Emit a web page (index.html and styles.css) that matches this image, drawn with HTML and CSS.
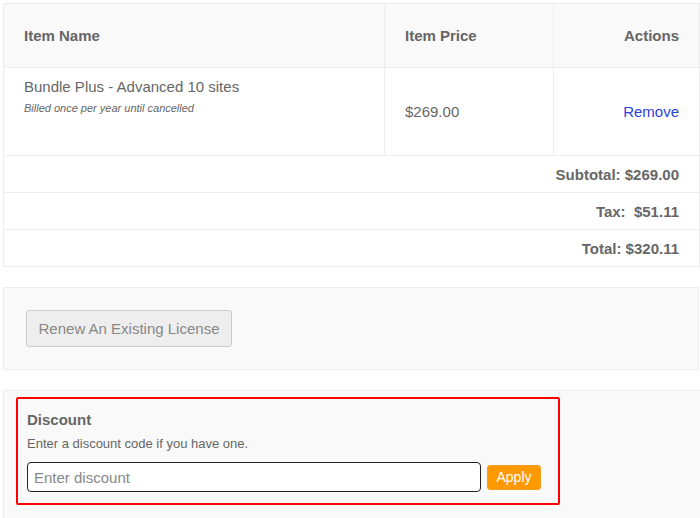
FILE: index.html
```html
<!DOCTYPE html>
<html>
<head>
<meta charset="utf-8">
<link rel="stylesheet" href="styles.css">
</head>
<body>
<div class="page">
  <table class="cart">
    <colgroup>
      <col class="c1"><col class="c2"><col class="c3">
    </colgroup>
    <thead>
      <tr>
        <th class="th-name">Item Name</th>
        <th class="th-price">Item Price</th>
        <th class="th-actions">Actions</th>
      </tr>
    </thead>
    <tbody>
      <tr class="item-row">
        <td class="td-name">
          <div class="item-title">Bundle Plus - Advanced 10 sites</div>
          <div class="item-note">Billed once per year until cancelled</div>
        </td>
        <td class="td-price">$269.00</td>
        <td class="td-actions"><a class="remove" href="#">Remove</a></td>
      </tr>
      <tr class="sum-row"><td colspan="3">Subtotal: $269.00</td></tr>
      <tr class="sum-row"><td colspan="3">Tax:&nbsp; $51.11</td></tr>
      <tr class="sum-row"><td colspan="3">Total: $320.11</td></tr>
    </tbody>
  </table>

  <div class="renew">
    <button class="renew-btn">Renew An Existing License</button>
  </div>

  <div class="discount-wrap">
    <div class="discount">
      <div class="discount-title">Discount</div>
      <div class="discount-desc">Enter a discount code if you have one.</div>
      <div class="discount-form">
        <input class="discount-input" type="text" placeholder="Enter discount">
        <button class="apply-btn">Apply</button>
      </div>
    </div>
  </div>
</div>
</body>
</html>
```

FILE: styles.css
```css
html, body {
  margin: 0;
  padding: 0;
  background: #fff;
}
body {
  font-family: "Liberation Sans", Arial, sans-serif;
  color: #666;
}
.page {
  padding: 3px 1px 0 3px;
}
.cart {
  width: 696px;
  border-collapse: collapse;
  border: 1px solid #eee;
  table-layout: fixed;
}
.c1 { width: 381px; }
.c2 { width: 169px; }
.c3 { width: 146px; }
.cart th {
  background: #f9f9f9;
  height: 63px;
  padding: 0 20px;
  font-size: 15px;
  font-weight: bold;
  color: #666;
  text-align: left;
  border-left: 1px solid #eee;
  border-bottom: 1px solid #eee;
}
.cart th.th-actions { text-align: right; }
.item-row td {
  height: 87px;
  border-left: 1px solid #eee;
  border-bottom: 1px solid #eee;
  padding: 0 20px;
  font-size: 15px;
  vertical-align: middle;
}
.item-row td.td-name {
  vertical-align: top;
  padding-top: 9px;
  height: 78px;
}
.item-title {
  font-size: 15px;
  line-height: 20px;
  color: #666;
}
.item-note {
  font-size: 11px;
  font-style: italic;
  color: #666;
  margin-top: 5px;
}
.td-price { color: #666; }
.td-actions { text-align: right; }
.remove {
  color: #2b3fd9;
  text-decoration: none;
}
.sum-row td {
  height: 36px;
  padding: 0 20px;
  text-align: right;
  font-size: 15px;
  font-weight: bold;
  color: #666;
  border-bottom: 1px solid #eee;
}
.renew {
  margin-top: 20px;
  width: 696px;
  box-sizing: border-box;
  height: 83px;
  background: #f9f9f9;
  border: 1px solid #eee;
  padding: 22px 0 0 22px;
}
.renew-btn {
  font-family: "Liberation Sans", Arial, sans-serif;
  font-size: 15px;
  color: #888;
  background: #eee;
  border: 1px solid #ccc;
  border-radius: 3px;
  height: 37px;
  width: 206px;
  padding: 0;
}
.discount-wrap {
  margin-top: 20px;
  width: 697px;
  box-sizing: border-box;
  background: #f9f9f9;
  border-top: 1px solid #eee;
  border-left: 1px solid #eee;
  padding: 6px 0 20px 12px;
}
.discount {
  width: 544px;
  box-sizing: border-box;
  border: 2px solid #f00;
  border-radius: 2px;
  padding: 12px 10px 11px 9px;
}
.discount-title {
  font-size: 15px;
  font-weight: bold;
  color: #666;
  line-height: 18px;
}
.discount-desc {
  font-size: 13px;
  color: #666;
  margin-top: 7px;
  line-height: 16px;
}
.discount-form {
  display: flex;
  align-items: center;
  gap: 6px;
  margin-top: 10px;
}
.discount-input {
  width: 454px;
  height: 30px;
  box-sizing: border-box;
  border: 1px solid #222;
  border-radius: 4px;
  padding: 0 6px;
  font-family: "Liberation Sans", Arial, sans-serif;
  font-size: 15px;
  background: #fff;
  outline: none;
}
.discount-input::placeholder { color: #888; }
.apply-btn {
  height: 25px;
  width: 54px;
  padding: 0;
  background: #f90;
  color: #fff;
  border: 1px solid #f3a020;
  border-radius: 3px;
  font-family: "Liberation Sans", Arial, sans-serif;
  font-size: 14px;
}
```
